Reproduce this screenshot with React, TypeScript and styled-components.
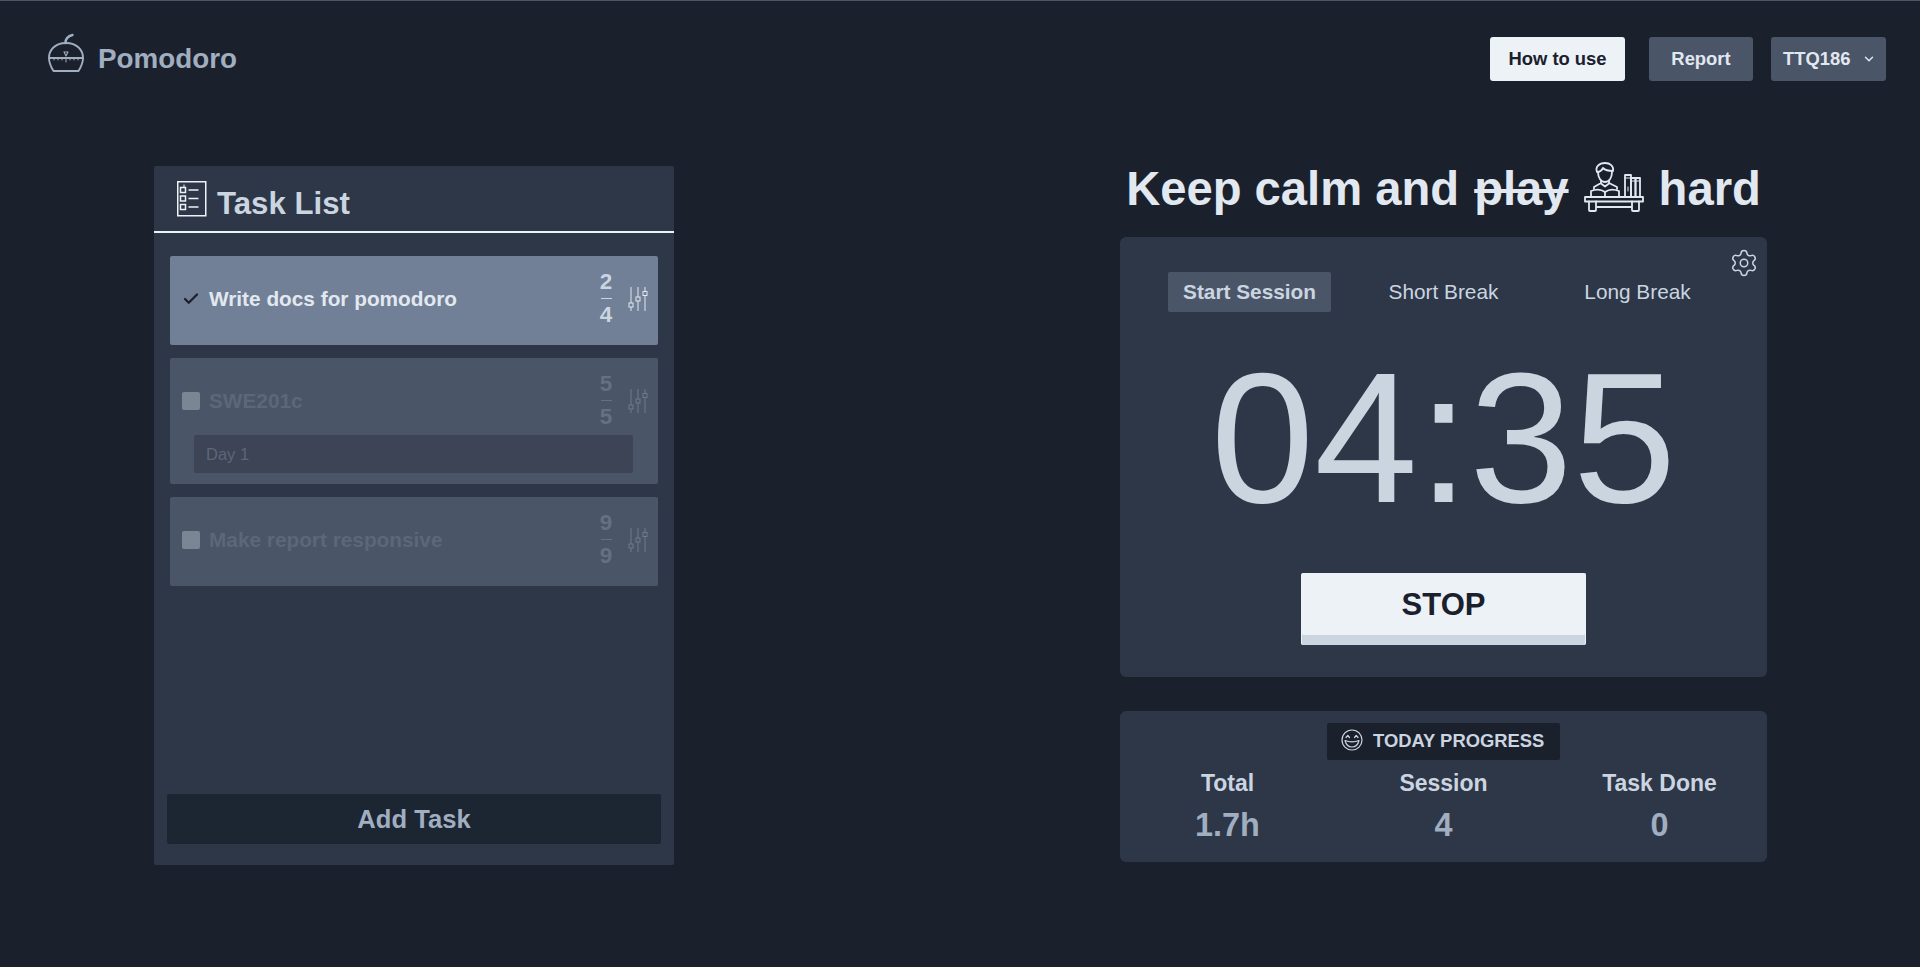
import React from "react";
import styled, { createGlobalStyle } from "styled-components";
import { Check, ChevronDown, Settings } from "lucide-react";

const Global = createGlobalStyle`
  html, body { margin: 0; padding: 0; background: #1a202c; }
  body { font-family: "Liberation Sans", Arial, sans-serif; }
  * { box-sizing: border-box; }
`;

const Page = styled.div`
  min-height: 967px;
  background: #1a202c;
  border-top: 1px solid #4a5568;
  display: flex;
  flex-direction: column;
`;

const TopBar = styled.header`
  display: flex;
  align-items: center;
  justify-content: space-between;
  height: 116px;
  padding: 0 34px 0 48px;
`;

const Brand = styled.div`
  display: flex;
  align-items: center;
  gap: 14px;
  color: #a0aec0;
  font-size: 27.8px;
  font-weight: 700;
`;

const LogoSvg = styled.svg`
  margin-top: -12px;
`;

const Nav = styled.nav`
  display: flex;
  align-items: center;
`;

const NavButton = styled.button<{ $light?: boolean; $gap: number; $w: number }>`
  width: ${(p) => p.$w}px;
  height: 44px;
  margin-left: ${(p) => p.$gap}px;
  border: 0;
  border-radius: 3px;
  background: ${(p) => (p.$light ? "#edf2f7" : "#4a5568")};
  color: ${(p) => (p.$light ? "#1a202c" : "#e2e8f0")};
  font: 700 18.4px "Liberation Sans", Arial, sans-serif;
  display: flex;
  align-items: center;
  justify-content: center;
  padding: 0;
`;

const UserButton = styled(NavButton)`
  justify-content: flex-start;
  gap: 12px;
  padding-left: 12px;
`;

const Main = styled.main`
  display: flex;
  justify-content: space-between;
  align-items: flex-start;
  padding: 0 153px 0 154px;
`;

const TaskPanel = styled.section`
  width: 520px;
  height: 699px;
  margin-top: 49px;
  background: #2d3748;
  border-radius: 2px;
  display: flex;
  flex-direction: column;
  padding-bottom: 21px;
`;

const TaskHeader = styled.div`
  height: 67px;
  border-bottom: 2px solid #edf2f7;
  display: flex;
  align-items: center;
  gap: 10px;
  padding-left: 23px;
  color: #cbd5e0;
  font-size: 31.2px;
  font-weight: 700;
`;

const TaskTitle = styled.span`
  margin-top: 10px;
`;

const TaskList = styled.div`
  flex: 1;
  display: flex;
  flex-direction: column;
  gap: 13px;
  padding: 23px 16px 0;
`;

const TaskCard = styled.div<{ $active?: boolean }>`
  min-height: 89px;
  background: ${(p) => (p.$active ? "#718096" : "#4a5568")};
  border-radius: 2px;
  padding: 0 10px 11px 12px;
  display: flex;
  flex-direction: column;
`;

const TaskRow = styled.div`
  height: 85px;
  margin-bottom: -8px;
  display: flex;
  align-items: center;
`;

const Done = styled.span`
  width: 18px;
  height: 18px;
  display: flex;
  align-items: center;
  justify-content: center;
  color: #1a202c;
`;

const Box = styled.span`
  width: 18px;
  height: 18px;
  border-radius: 2px;
  background: #7c8594;
`;

const TaskName = styled.span<{ $active?: boolean }>`
  flex: 1;
  margin-left: 9px;
  font-size: 20.8px;
  font-weight: 700;
  color: ${(p) => (p.$active ? "#e2e8f0" : "#5d6778")};
`;

const Count = styled.div<{ $active?: boolean }>`
  width: 24px;
  display: flex;
  flex-direction: column;
  align-items: center;
  font-size: 22.4px;
  font-weight: 700;
  line-height: 24px;
  color: ${(p) => (p.$active ? "#cbd5e0" : "#657082")};
`;

const CountRule = styled.i<{ $active?: boolean }>`
  display: block;
  width: 11px;
  height: 1px;
  margin: 4px 0 4px;
  background: ${(p) => (p.$active ? "#cbd5e0" : "#657082")};
`;

const SliderWrap = styled.span<{ $active?: boolean }>`
  display: flex;
  margin-left: 10px;
  color: ${(p) => (p.$active ? "#e2e8f0" : "#717b8b")};
`;

const Sub = styled.div`
  height: 38px;
  margin: 0 15px 0 12px;
  padding-left: 12px;
  display: flex;
  align-items: center;
  background: #3c4456;
  border-radius: 2px;
  color: #5d6778;
  font-size: 16.5px;
`;

const AddTask = styled.button`
  width: 494px;
  height: 50px;
  margin: 0 auto;
  flex: none;
  border: 0;
  border-radius: 2px;
  background: #1c2532;
  color: #a0aec0;
  font: 700 25.6px "Liberation Sans", Arial, sans-serif;
`;

const Side = styled.section`
  width: 647px;
  margin-top: 38px;
  display: flex;
  flex-direction: column;
`;

const Motto = styled.h1`
  margin: 0;
  height: 82px;
  padding-bottom: 15px;
  display: flex;
  align-items: center;
  justify-content: center;
  gap: 15px;
  font-size: 47.2px;
  font-weight: 700;
  color: #e2e8f0;
  white-space: pre;
`;

const Struck = styled.s`
  text-decoration-thickness: 4px;
`;

const ReaderSvg = styled.svg`
  margin-top: -3px;
`;

const TimerCard = styled.div`
  position: relative;
  height: 440px;
  background: #2d3748;
  border-radius: 6px;
  padding-top: 35px;
  display: flex;
  flex-direction: column;
  align-items: center;
`;

const Gear = styled.span`
  position: absolute;
  top: 11px;
  right: 8px;
  color: #cbd5e0;
  display: flex;
`;

const Tabs = styled.div`
  display: grid;
  grid-template-columns: repeat(3, 194px);
  justify-items: center;
`;

const Tab = styled.div<{ $on?: boolean }>`
  height: 40px;
  padding: 0 15px;
  display: flex;
  align-items: center;
  border-radius: 2px;
  font-size: 20.8px;
  font-weight: ${(p) => (p.$on ? 700 : 400)};
  background: ${(p) => (p.$on ? "#4a5568" : "transparent")};
  color: #cbd5e0;
`;

const Clock = styled.div`
  margin-top: 34px;
  font-size: 186px;
  line-height: 184px;
  color: #cbd5e0;
`;

const StopButton = styled.button`
  margin-top: 43px;
  width: 285px;
  height: 72px;
  border: 1px solid #edf2f7;
  border-bottom: 0;
  border-radius: 2px;
  background: #edf2f7;
  box-shadow: inset 0 -10px 0 #cbd5e0;
  color: #1a202c;
  font: 700 31px "Liberation Sans", Arial, sans-serif;
  padding: 0 0 10px;
`;

const ProgressCard = styled.div`
  position: relative;
  height: 151px;
  margin-top: 34px;
  background: #2d3748;
  border-radius: 6px;
  padding-top: 12px;
  display: flex;
  flex-direction: column;
  align-items: center;
`;

const Badge = styled.div`
  width: 233px;
  height: 37px;
  border-radius: 2px;
  background: #1a202c;
  color: #cbd5e0;
  display: flex;
  align-items: center;
  gap: 10px;
  padding: 0 0 1px 14px;
  font-size: 18.4px;
  font-weight: 700;
`;

const SmileSvg = styled.svg`
  margin-top: -2px;
`;

const Stats = styled.div`
  display: grid;
  grid-template-columns: repeat(3, 216px);
  justify-items: center;
  margin-top: 10px;
`;

const Stat = styled.div`
  display: flex;
  flex-direction: column;
  align-items: center;
  gap: 11px;
`;

const StatLabel = styled.span`
  font-size: 23px;
  font-weight: 700;
  line-height: 26px;
  color: #cbd5e0;
`;

const StatValue = styled.span`
  font-size: 32.4px;
  font-weight: 700;
  line-height: 37px;
  color: #a0aec0;
`;

const TomatoIcon = () => (
  <LogoSvg width="36" height="40" viewBox="0 0 36 40" fill="none" stroke="#a0aec0" strokeWidth="1.900" strokeLinecap="round" strokeLinejoin="round">
    <path d="M18 10C7 10 1 17 1 25c0 5 2 9 4.500 13h25c2.500-4 4.500-8 4.500-13 0-8-6-15-17-15Z" />
    <path d="M1 25h34" />
    <path d="M17.500 10c0-4 2.500-7 7-8" strokeWidth="2.400" />
    <path d="M16 19h4l-2 4Z" strokeWidth="1.100" />
    <path d="M6 25v2M10 25v2M14 25v2M18 25v4M22 25v2M26 25v2M30 25v2" strokeWidth="1" />
  </LogoSvg>
);

const ListIcon = () => (
  <svg width="30" height="36" viewBox="0 0 30 36" fill="none" stroke="#edf2f7">
    <rect x=".75" y=".75" width="28" height="34" strokeWidth="1.500" />
    <rect x="3.500" y="6.500" width="5" height="5" strokeWidth="1.500" />
    <rect x="3.500" y="15" width="5" height="5" strokeWidth="1.500" />
    <rect x="3.500" y="23.500" width="5" height="5" strokeWidth="1.500" />
    <path d="M11.500 9h10M11.500 17.500h10M11.500 26h10" strokeWidth="1.400" />
    <path d="M7 3.500v2.500" strokeWidth="1" />
  </svg>
);

const SliderIcon = () => (
  <svg width="20" height="24" viewBox="0 0 20 24" fill="none" stroke="currentColor" strokeWidth="1">
    <path d="M3 0v16M3 20v4M10 0v10M10 14v10M17 0v4.500M17 8.500v15.500" />
    <rect x="1" y="16" width="4" height="4" />
    <rect x="8" y="10" width="4" height="4" />
    <rect x="15" y="4.500" width="4" height="4" />
  </svg>
);

const ReaderIcon = () => (
  <ReaderSvg width="60" height="50" viewBox="0 0 60 50" fill="none" stroke="#e2e8f0" strokeWidth="1.800" strokeLinejoin="round" strokeLinecap="round">
    <path d="M13 10C11 5 15 1 21 1c5 0 9 3 8 8-4 0-8-1-10-3-1 2-3 4-6 4Z" />
    <path d="M14 10c0 6 3 10 7 10s7-4 7-10" />
    <path d="M17 19v2l-7 4v2M25 19v2l8 4v2" />
    <path d="M17 21.500l4 3 4-3" />
    <path d="M7 29c5-2 10-2 14 1 4-3 9-3 14-1v6H7Z" />
    <path d="M21 30v5" />
    <path d="M1 35h58v4.500H1Z" />
    <path d="M5 39.500V48a1 1 0 0 0 1 1h5a1 1 0 0 0 1-1v-8.500M48 39.500V48a1 1 0 0 0 1 1h5a1 1 0 0 0 1-1v-8.500M12 45h36" />
    <rect x="41" y="13" width="6" height="22" />
    <rect x="47" y="16" width="4.500" height="19" />
    <rect x="51.500" y="16" width="4.500" height="19" />
    <path d="M44 25v4M41 16h6M47 19h4.500M51.500 19h4.500" strokeWidth="1" />
  </ReaderSvg>
);

const SmileIcon = () => (
  <SmileSvg width="22" height="22" viewBox="0 0 22 22" fill="none" stroke="#cbd5e0" strokeWidth="1.200" strokeLinecap="round" strokeLinejoin="round">
    <circle cx="11" cy="11" r="10" />
    <path d="M5 8.500 6.800 6.500 8.500 8.500M13.500 8.500 15.200 6.500 17 8.500" />
    <path d="M4 11.500c1 4 3.500 6.500 7 6.500s6-2.500 7-6.500c-4 1.500-10 1.500-14 0Z" />
  </SmileSvg>
);

const tasks = [
  { name: "Write docs for pomodoro", a: 2, b: 4, active: true },
  { name: "SWE201c", a: 5, b: 5, sub: "Day 1" },
  { name: "Make report responsive", a: 9, b: 9 },
];

const stats = [
  ["Total", "1.7h"],
  ["Session", "4"],
  ["Task Done", "0"],
];

export default function App() {
  return (
    <Page>
      <Global />
      <TopBar>
        <Brand>
          <TomatoIcon />
          Pomodoro
        </Brand>
        <Nav>
          <NavButton $light $gap={0} $w={135}>How to use</NavButton>
          <NavButton $gap={24} $w={104}>Report</NavButton>
          <UserButton $gap={18} $w={115}>
            TTQ186
            <ChevronDown size={14} strokeWidth={2.5} />
          </UserButton>
        </Nav>
      </TopBar>
      <Main>
        <TaskPanel>
          <TaskHeader>
            <ListIcon />
            <TaskTitle>Task List</TaskTitle>
          </TaskHeader>
          <TaskList>
            {tasks.map((t) => (
              <TaskCard key={t.name} $active={t.active}>
                <TaskRow>
                  {t.active ? (
                    <Done><Check size={20} strokeWidth={3} /></Done>
                  ) : (
                    <Box />
                  )}
                  <TaskName $active={t.active}>{t.name}</TaskName>
                  <Count $active={t.active}>
                    {t.a}
                    <CountRule $active={t.active} />
                    {t.b}
                  </Count>
                  <SliderWrap $active={t.active}><SliderIcon /></SliderWrap>
                </TaskRow>
                {t.sub && <Sub>{t.sub}</Sub>}
              </TaskCard>
            ))}
          </TaskList>
          <AddTask>Add Task</AddTask>
        </TaskPanel>
        <Side>
          <Motto>
            <span>Keep calm and</span>
            <Struck>play</Struck>
            <ReaderIcon />
            <span>hard</span>
          </Motto>
          <TimerCard>
            <Gear><Settings size={30} strokeWidth={1.2} /></Gear>
            <Tabs>
              <Tab $on>Start Session</Tab>
              <Tab>Short Break</Tab>
              <Tab>Long Break</Tab>
            </Tabs>
            <Clock>04:35</Clock>
            <StopButton>STOP</StopButton>
          </TimerCard>
          <ProgressCard>
            <Badge>
              <SmileIcon />
              TODAY PROGRESS
            </Badge>
            <Stats>
              {stats.map(([label, value]) => (
                <Stat key={label}>
                  <StatLabel>{label}</StatLabel>
                  <StatValue>{value}</StatValue>
                </Stat>
              ))}
            </Stats>
          </ProgressCard>
        </Side>
      </Main>
    </Page>
  );
}
